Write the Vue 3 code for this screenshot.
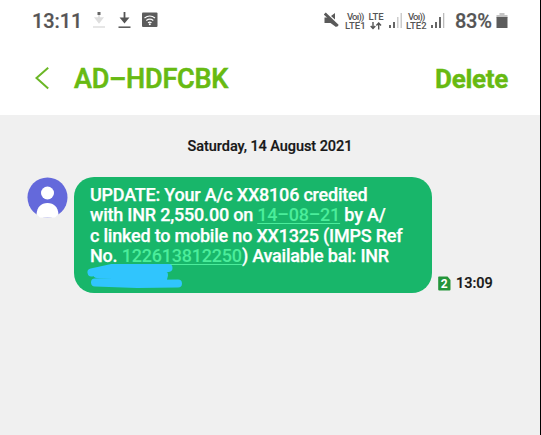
<script setup>
const contact = 'AD–HDFCBK'
const message = [
  [{ t: 'UPDATE: Your A/c XX8106 credited' }],
  [{ t: 'with INR 2,550.00 on ' }, { t: '14–08–21', link: true }, { t: ' by A/' }],
  [{ t: 'c linked to mobile no XX1325 (IMPS Ref' }],
  [{ t: 'No. ' }, { t: '122613812250', link: true }, { t: ') Available bal: INR' }],
]
</script>

<template>
  <div class="screen">
    <div class="status">
      <span class="clock">13:11</span>
      <svg class="tray" width="70" height="20" viewBox="0 0 70 20">
        <path d="M6 4v6M2.500 7h7L6 11.500z" fill="#dedede" stroke="#dedede" stroke-width="1.500" />
        <path d="M0 16h12" stroke="#dedede" stroke-width="1.500" />
        <path d="M4.500 1h3v3h-3z" fill="#666" />
        <path d="M31.500 1v8M28.500 7.500h6L31.500 11z" fill="#555" stroke="#555" stroke-width="1.800" />
        <path d="M25.500 16.200h12" stroke="#555" stroke-width="1.500" />
        <rect x="49" y="1.500" width="15.500" height="14.500" rx="1" fill="#5c5c5c" />
        <path d="M51.500 7q5.300-4 10.500 0M53.300 9.500q3.500-2.600 7 0M55 11.700q1.800-1.300 3.500 0" fill="none" stroke="#fff" stroke-width="1.200" />
        <circle cx="56.800" cy="13.300" r="1" fill="#fff" />
      </svg>
      <svg class="mute" width="15" height="16" viewBox="0 0 15 16">
        <path d="M.5 5.500H4.500L12 13v2L6.500 11H.5zM7 4l4-3v6.500z" fill="#5a5a5a" />
        <path d="M.8 1.500l13 12.500" stroke="#5a5a5a" stroke-width="2.800" />
      </svg>
      <div class="net volte"><span class="vo">Voı))</span><span>LTE1</span></div>
      <div class="net lte">
        <span>LTE</span>
        <svg width="12" height="8" viewBox="0 0 12 8"><path d="M3 0v6M.7 4L3 6.500 5.300 4M8.700 7.500v-6M6.400 3.500L8.700 1 11 3.500" fill="none" stroke="#555" stroke-width="1.400" /></svg>
      </div>
      <svg class="signal" width="15" height="15" viewBox="0 0 15 15"><path d="M1 12h2v3H1zM5 9h2v6H5z" fill="#666" /><path d="M9 4h1.500v11H9zM12.500 0h1.500v15h-1.500z" fill="#ccc" /></svg>
      <div class="net volte second"><span class="vo">Voı))</span><span>LTE2</span></div>
      <svg class="signal" width="15" height="15" viewBox="0 0 15 15"><path d="M1 12h2v3H1zM5 9h2v6H5zM9 4h2v11H9z" fill="#666" /><path d="M13 0h1.300v15H13z" fill="#bbb" /></svg>
      <span class="percent">83%</span>
      <svg class="battery" width="12" height="17" viewBox="0 0 12 17"><path d="M3.500 1h5v2H11.500v3H.5V3h3z" fill="#c4c4c4" /><path d="M.5 5h11v11H.5z" fill="#5c5c5c" /></svg>
    </div>

    <header class="bar">
      <svg class="back" width="16" height="24" viewBox="0 0 16 24"><path d="M14.200 1.700L2.500 12l11.700 10.500" fill="none" stroke="#6bb726" stroke-width="2" /></svg>
      <h1>{{ contact }}</h1>
      <span class="delete">Delete</span>
    </header>

    <main>
      <p class="date">Saturday, 14 August 2021</p>
      <div class="row">
        <svg class="avatar" width="41" height="41" viewBox="0 0 41 41">
          <circle cx="20.500" cy="20.500" r="20" fill="#6469db" />
          <circle cx="20.500" cy="16" r="6.500" fill="#fff" />
          <path d="M9.500 37.300C10 30 14 26 20.500 26s10.500 4 11 11.300L28 40.500H13z" fill="#fff" />
        </svg>
        <div class="bubble">
          <p v-for="(line, i) in message" :key="i" class="line">
            <span v-for="(part, j) in line" :key="j" :class="{ link: part.link }">{{ part.t }}</span>
          </p>
          <svg class="scribble" width="98" height="26" viewBox="0 0 98 26">
            <path d="M4.500 9.500L25 5L81.500 5L10 11L77 12L76 16L8 19.500L50 21L91 20.500" fill="none" stroke="#30c5fd" stroke-width="8" stroke-linecap="round" stroke-linejoin="round" />
          </svg>
        </div>
        <div class="meta">
          <svg width="13" height="15" viewBox="0 0 13 15">
            <path d="M1 .5h8.500L12.500 4v9.500q0 1-1 1H1.200q-1 0-1-1v-12q0-1 .8-1z" fill="#24953a" />
            <text x="6.300" y="11.800" text-anchor="middle" class="sim">2</text>
          </svg>
          <span class="time">13:09</span>
        </div>
      </div>
    </main>
  </div>
</template>

<style>
body { background: #f0f0f0; }
</style>

<style scoped>
.screen { box-sizing: border-box; width: 541px; height: 435px; overflow: hidden; border-right: 1px solid #000; background: #f0f0f0; font-family: Roboto, sans-serif; }
.status { display: flex; align-items: flex-start; height: 40px; box-sizing: border-box; padding: 11px 0 0 32px; background: #fff; color: #555; white-space: nowrap; }
.clock { width: 60px; font-size: 20px; line-height: 21px; font-weight: 500; letter-spacing: -.1px; -webkit-text-stroke: .2px; }
.tray { margin-left: 1px; }
.mute { margin: 1px 0 0 161px; flex: none; }
.net { display: flex; flex-direction: column; font-size: 9.500px; line-height: 9px; font-weight: 500; padding-top: 1px; height: 20px; }
.net > span { height: 9px; }
.vo { padding-left: 2px; letter-spacing: -.8px; }
.volte { width: 23px; margin-left: 6px; }
.lte { width: 16px; margin-left: 0; align-items: center; }
.lte svg { margin-top: 1px; }
.signal { flex: none; margin: 2px 0 0 4px; }
.second { margin-left: 3px; width: 20px; }
.percent { width: 37px; margin-left: 10px; font-size: 20px; line-height: 21px; font-weight: 500; letter-spacing: -.3px; -webkit-text-stroke: .2px; }
.battery { margin: 1px 0 0 4px; flex: none; }
.bar { display: flex; align-items: center; height: 75px; box-sizing: border-box; padding: 3px 32px 0 34px; background: #fff; color: #67ba12; }
.back { margin-bottom: 2px; }
h1 { margin: 0 0 0 24px; font-size: 27px; line-height: 32px; font-weight: 500; letter-spacing: -.25px; -webkit-text-stroke: .6px; }
.delete { margin-left: auto; font-size: 26px; font-weight: 700; letter-spacing: -.3px; -webkit-text-stroke: .4px; }
main { padding-top: 23px; }
p { margin: 0; }
.date { padding-left: 0; text-align: center; font-size: 14.500px; line-height: 18px; font-weight: 500; letter-spacing: -.06px; color: #171717; -webkit-text-stroke: .2px; }
.row { display: flex; align-items: flex-start; padding: 21px 0 0 27px; }
.avatar { flex: none; }
.bubble { position: relative; width: 358px; height: 116px; box-sizing: border-box; margin-left: 6px; padding: 8px 0 0 16px; border-radius: 20px; background: #18b66a; color: #fff; font-size: 18px; font-weight: 500; letter-spacing: -.21px; -webkit-text-stroke: .25px; }
.line { line-height: 20.400px; white-space: pre; }
.link { color: #4bed9b; -webkit-text-stroke: 0; text-decoration: underline; text-decoration-thickness: 1px; text-underline-offset: 2px; }
.scribble { position: absolute; left: 13px; top: 86px; }
.meta { display: flex; align-items: center; gap: 5px; margin: 97px 0 0 6px; font-size: 14.500px; line-height: 18px; font-weight: 500; color: #171717; -webkit-text-stroke: .2px; }
.time { padding-top: 1px; }
.sim { fill: #fff; font-size: 12px; font-weight: 700; }
</style>
